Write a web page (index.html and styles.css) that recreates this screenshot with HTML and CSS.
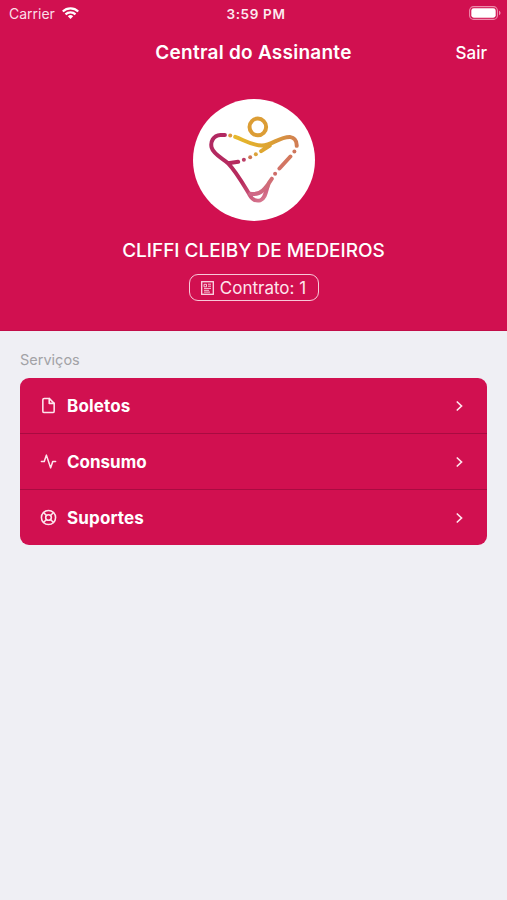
FILE: index.html
```html
<!DOCTYPE html>
<html lang="pt-BR">
<head>
<meta charset="utf-8">
<title>Central do Assinante</title>
<link rel="stylesheet" href="styles.css">
</head>
<body>
<header class="hero">
  <div class="status">
    <div class="carrier"><span>Carrier</span>
      <svg class="wifi" viewBox="0 0 17 12" fill="none" stroke="#fff" stroke-width="2.2"><path d="M.8 4.5a11 11 0 0 1 15.4 0M3.5 7.4a7.1 7.1 0 0 1 10 0"/><path d="M8.5 12 5.8 9.3a3.9 3.9 0 0 1 5.4 0z" fill="#fff" stroke="none"/></svg>
    </div>
    <span class="time">3:59 PM</span>
    <svg class="battery" viewBox="0 0 32 14"><rect x=".6" y=".6" width="27.8" height="12.8" rx="4" fill="none" stroke="#ee8bac" stroke-width="1.1"/><rect x="2.3" y="2.3" width="24.4" height="9.4" rx="2.4" fill="#fff"/><path d="M30 4.8c2 .7 2 3.7 0 4.4z" fill="#ee8bac"/></svg>
  </div>
  <nav class="navbar">
    <h1 class="title">Central do Assinante</h1>
    <a class="logout">Sair</a>
  </nav>
  <div class="avatar">
    <svg viewBox="15 14 367 367" fill="none" stroke-width="12" stroke-linecap="round">
      <defs>
        <linearGradient id="left" gradientUnits="userSpaceOnUse" x1="90" y1="120" x2="225" y2="325"><stop stop-color="#b12962"/><stop offset=".65" stop-color="#b82b5d"/><stop offset="1" stop-color="#d87a91"/></linearGradient>
        <linearGradient id="top" gradientUnits="userSpaceOnUse" x1="140" y1="130" x2="330" y2="155"><stop stop-color="#e7b92c"/><stop offset=".55" stop-color="#dda331"/><stop offset="1" stop-color="#d07c55"/></linearGradient>
        <linearGradient id="right" gradientUnits="userSpaceOnUse" x1="310" y1="190" x2="220" y2="320"><stop stop-color="#d3785b"/><stop offset="1" stop-color="#cf6787"/></linearGradient>
      </defs>
      <circle cx="210" cy="98" r="25" stroke="#dc9d35"/>
      <path stroke="url(#top)" d="M142 128C168 137 193 154 222 154C253 154 272 128 306 128Q328 132 327 155M246 154 220 171"/>
      <path stroke="url(#left)" d="M111 122H98C75 124 67 143 71 160C76 180 104 193 120 207C145 233 164 267 184 300C195 322 207 321 217 319C231 314 234 296 239 278M120 207Q136 206 151 203"/>
      <path stroke="url(#right)" d="M308 187 275 223M252 254Q238 277 225 289Q210 303 187 299M252 254Q243 264 239 278"/>
      <g stroke="none"><circle cx="127" cy="124" r="6" fill="#df9a3d"/><circle cx="168" cy="197" r="6" fill="#bb3e67"/><circle cx="187" cy="189" r="6" fill="#cd7654"/><circle cx="204" cy="180" r="6" fill="#dca33a"/><circle cx="320" cy="172" r="6" fill="#ce765c"/><circle cx="262" cy="239" r="6" fill="#ce6c68"/></g>
    </svg>
  </div>
  <div class="name">CLIFFI CLEIBY DE MEDEIROS</div>
  <div class="contract">
    <svg viewBox="0 0 13 14" fill="none" stroke="#fbdbe5"><rect x=".7" y=".7" width="11.6" height="12.6" stroke-width="1.3"/><path d="M3 3.3h2.5v2.5H3zM7 3.2h3M7 5.2h3M3 7.4h7M3 9.3h5M3 11.1h6" stroke-width=".9"/></svg>
    <span>Contrato: 1</span>
  </div>
</header>
<main class="services">
  <h2 class="section">Serviços</h2>
  <div class="list">
    <a class="row"><svg class="icon" viewBox="0 0 24 24"><path d="M13 2H6a2 2 0 0 0-2 2v16a2 2 0 0 0 2 2h12a2 2 0 0 0 2-2V9z"/><path d="M13 2v7h7"/></svg><span class="label boletos">Boletos</span><svg class="chevron" viewBox="0 0 7 12"><path d="m1.3 2 4.2 4-4.2 4"/></svg></a>
    <a class="row"><svg class="icon" viewBox="0 0 24 24"><path d="M22 12h-4l-3 9L9 3l-3 9H2"/></svg><span class="label">Consumo</span><svg class="chevron" viewBox="0 0 7 12"><path d="m1.3 2 4.2 4-4.2 4"/></svg></a>
    <a class="row"><svg class="icon" viewBox="0 0 24 24"><circle cx="12" cy="12" r="10"/><circle cx="12" cy="12" r="4"/><path d="m4.93 4.93 4.24 4.24M14.83 14.83l4.24 4.24M14.83 9.17l4.24-4.24M4.93 19.07l4.24-4.24"/></svg><span class="label suportes">Suportes</span><svg class="chevron" viewBox="0 0 7 12"><path d="m1.3 2 4.2 4-4.2 4"/></svg></a>
  </div>
</main>
</body>
</html>
```
FILE: styles.css
```css
* { box-sizing: border-box; }
body { margin: 0; min-height: 900px; background: #efeff4; font-family: Inter, "Liberation Sans", sans-serif; color: #fff; }
svg { display: block; flex: none; }
.hero { height: 331px; background: #d11050; display: flex; flex-direction: column; align-items: center; border-bottom: 1px solid #c20d48; }
.status { width: 100%; height: 27px; padding: 0 6px 0 9px; display: grid; grid-template-columns: 1fr auto 1fr; align-items: center; font-size: 14px; }
.carrier { display: flex; align-items: center; gap: 7px; color: #fbdfe8; }
.wifi { width: 17px; height: 12px; margin-top: -1px; }
.time { font-weight: 600; font-size: 13.5px; letter-spacing: .65px; padding-left: 2px; color: #fde9ef; }
.battery { width: 32px; height: 14px; margin-top: -1px; justify-self: end; }
.navbar { width: 100%; height: 50px; padding: 0 20px; display: grid; grid-template-columns: 1fr auto 1fr; align-items: center; }
.title { grid-column: 2; margin: 0; font-size: 19px; font-weight: 600; letter-spacing: .25px; }
.logout { justify-self: end; font-size: 17px; font-weight: 500; padding-top: 1px; }
.avatar { width: 122px; height: 122px; margin: 22px 0 0 1px; border-radius: 50%; background: #fff; }
.name { margin-top: 18px; height: 24px; line-height: 24px; font-size: 19px; font-weight: 500; letter-spacing: -.02px; white-space: nowrap; }
.contract { margin-top: 11px; width: 130px; height: 27px; border: 1.5px solid #f8c9d8; border-radius: 9px; display: flex; align-items: center; justify-content: center; gap: 6px; font-size: 17px; white-space: nowrap; color: #fde5ed; }
.contract svg { width: 13px; height: 14px; }
.services { padding: 19px 20px 0; }
.section { margin: 0; height: 20px; line-height: 20px; font-size: 14.5px; font-weight: 400; color: #a2a2a6; }
.list { margin-top: 8px; height: 167px; border-radius: 9px; overflow: hidden; background: #d11050; display: grid; grid-template-rows: 56px 56px 55px; }
.row { display: flex; align-items: center; padding: 0 24px 0 20px; border-bottom: 1px solid #a90b41; }
.row:last-child { border-bottom: 0; }
.icon { width: 17px; height: 17px; fill: none; stroke: #fde5ed; stroke-width: 2.2; stroke-linecap: round; stroke-linejoin: round; }
.label { margin: 0 0 0 10px; flex: 1; font-size: 17px; font-weight: 700; }
.boletos, .suportes { letter-spacing: .15px; }
.chevron { width: 7px; height: 12px; fill: none; stroke: #fde5ed; stroke-width: 1.7; stroke-linecap: round; }
```
